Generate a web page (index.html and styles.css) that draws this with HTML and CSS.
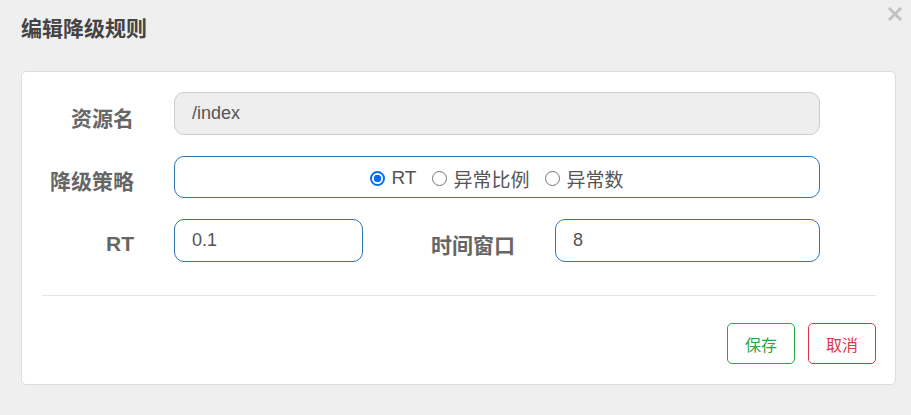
FILE: index.html
```html
<!DOCTYPE html>
<html lang="zh">
<head>
<meta charset="utf-8">
<link rel="stylesheet" href="styles.css">
</head>
<body>
<div class="dialog">
  <div class="header">
    <h4 class="title">编辑降级规则</h4>
    <svg class="close" width="16" height="16" viewBox="0 0 16 16" aria-label="关闭"><path d="M2 2 L14 14 M14 2 L2 14" stroke="#c2c2c2" stroke-width="3" stroke-linecap="butt"/></svg>
  </div>
  <div class="card">
    <div class="form">
      <div class="row">
        <label class="label">资源名</label>
        <div class="input disabled">/index</div>
      </div>
      <div class="row">
        <label class="label">降级策略</label>
        <div class="input radios">
          <span class="radio"><span class="dot checked"></span>RT</span>
          <span class="radio"><span class="dot"></span>异常比例</span>
          <span class="radio"><span class="dot"></span>异常数</span>
        </div>
      </div>
      <div class="row split">
        <label class="label">RT</label>
        <div class="input small">0.1</div>
        <label class="label label2">时间窗口</label>
        <div class="input">8</div>
      </div>
    </div>
    <div class="divider"></div>
    <div class="footer">
      <button class="btn save">保存</button>
      <button class="btn cancel">取消</button>
    </div>
  </div>
</div>
</body>
</html>
```
FILE: styles.css
```css
html, body {
  margin: 0;
  padding: 0;
  background: #efefef;
  font-family: "Liberation Sans", Arial, "Noto Sans CJK SC", sans-serif;
  color: #555;
}
.dialog {
  padding: 0 15px 30px 21px;
  width: 875px;
}
.header {
  display: flex;
  justify-content: space-between;
  align-items: flex-start;
  height: 71px;
}
.title {
  margin: 17px 0 0 0;
  font-size: 21px;
  font-weight: bold;
  color: #444;
  line-height: 24px;
}
.close {
  margin-top: 6px;
  margin-right: -7px;
}
.card {
  background: #fff;
  border: 1px solid #ddd;
  border-radius: 5px;
  box-sizing: border-box;
  height: 314px;
  padding: 20px 19px 0 20px;
}
.form {
  display: flex;
  flex-direction: column;
  gap: 21px;
  width: 778px;
}
.row {
  display: flex;
  align-items: center;
}
.label {
  width: 92px;
  text-align: right;
  font-size: 21px;
  font-weight: bold;
  color: #666;
  margin-right: 40px;
  margin-top: 6px;
  flex-shrink: 0;
}
.label2 {
  width: 152px;
  margin-right: 40px;
}
.input {
  flex: 1;
  height: 43px;
  box-sizing: border-box;
  border: 1px solid #2f75b5;
  border-radius: 10px;
  padding: 0 17px;
  display: flex;
  align-items: center;
  font-size: 18px;
  color: #555;
}
.input.disabled {
  background: #eeeeee;
  border-color: #ccc;
}
.input.small {
  flex: 0 0 189px;
}
.radios {
  justify-content: center;
  height: 42px;
  gap: 16px;
  font-size: 19px;
  color: #555;
  padding-top: 2px;
}
.radio {
  display: inline-flex;
  align-items: center;
  gap: 6px;
}
.dot {
  width: 15px;
  height: 15px;
  border: 1px solid #767676;
  border-radius: 50%;
  box-sizing: border-box;
  display: inline-block;
}
.dot.checked {
  border: 2px solid #0a6cf0;
  background: radial-gradient(circle, #0a6cf0 0 3.5px, #fff 4px);
}
.divider {
  height: 1px;
  background: #e5e5e5;
  margin-top: 33px;
}
.footer {
  display: flex;
  justify-content: flex-end;
  gap: 13px;
  margin-top: 27px;
}
.btn {
  width: 68px;
  height: 41px;
  background: #fff;
  border-radius: 5px;
  font-size: 16px;
  font-family: "Liberation Sans", "Noto Sans CJK SC", sans-serif;
  cursor: pointer;
}
.save {
  border: 1px solid #28a745;
  color: #28a745;
}
.cancel {
  border: 1px solid #dc3545;
  color: #dc3545;
}
```
